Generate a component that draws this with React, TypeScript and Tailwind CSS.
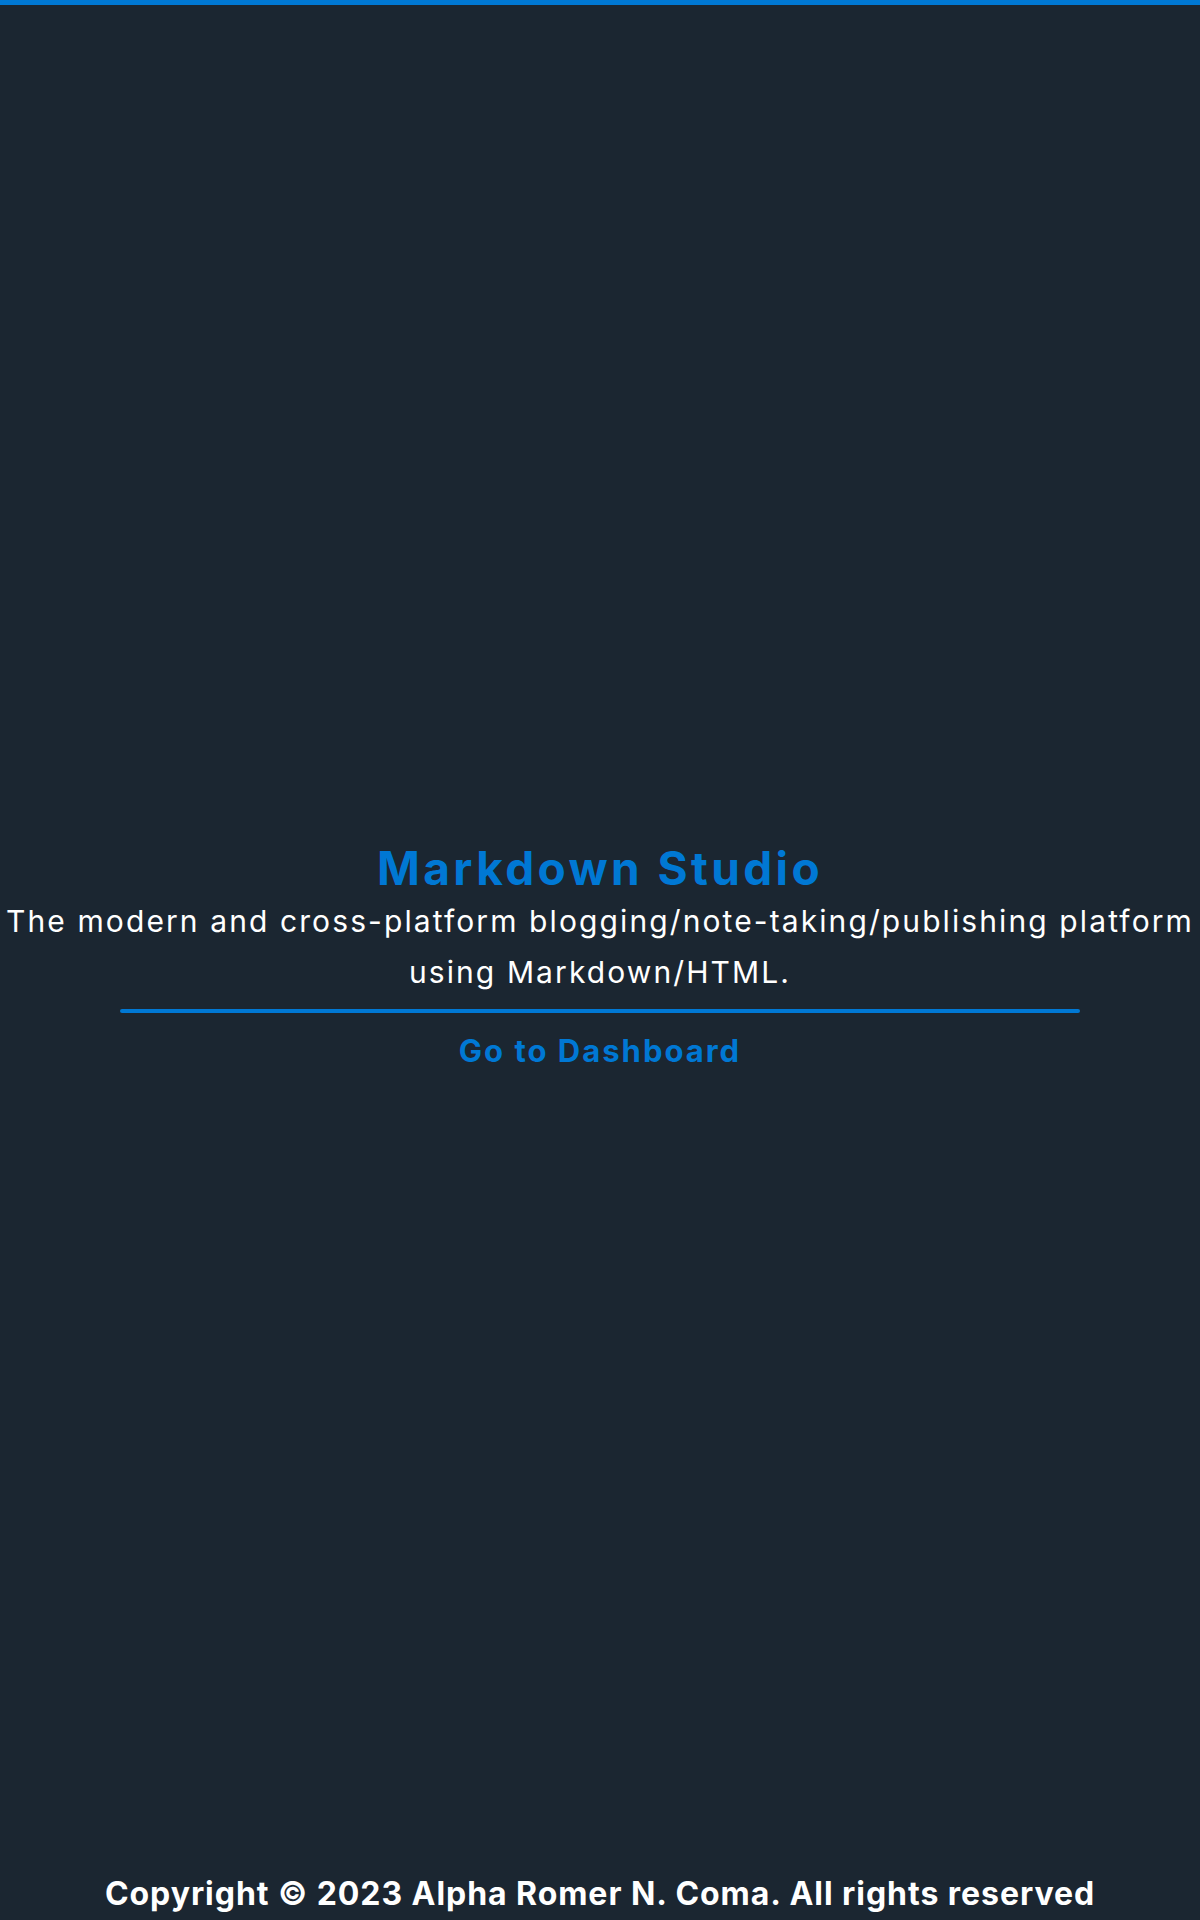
const App = () => {
  return (
    <div
      className="min-h-screen flex flex-col bg-[#1b2631] border-t-[5px] border-[#0078d4] text-white"
      style={{ fontFamily: "Inter, 'Noto Sans', sans-serif" }}
    >
      {/* Hero */}
      <main className="flex-1 flex flex-col items-center justify-center text-center pt-[32px]">
        <h1 className="text-[46px] leading-[56px] font-bold tracking-[3.4px] text-[#0078d4]">Markdown Studio</h1>
        <p className="text-[30px] leading-[51px] font-normal tracking-[2.1px] max-w-[1200px]">
          The modern and cross-platform blogging/note-taking/publishing platform using Markdown/HTML.
        </p>
        <hr className="w-[80%] h-[4px] mt-[11px] border-0 rounded-full bg-[#0078d4]" />
        <a href="#" className="mt-[18px] text-[31px] leading-[40px] font-bold tracking-[2px] text-[#0078d4]">
          Go to Dashboard
        </a>
      </main>

      {/* Footer */}
      <footer className="text-center pb-[6px]">
        <p className="text-[32px] leading-[40px] font-bold tracking-[0.95px]">
          Copyright © 2023 Alpha Romer N. Coma. All rights reserved
        </p>
      </footer>
    </div>
  );
};

export default App;
